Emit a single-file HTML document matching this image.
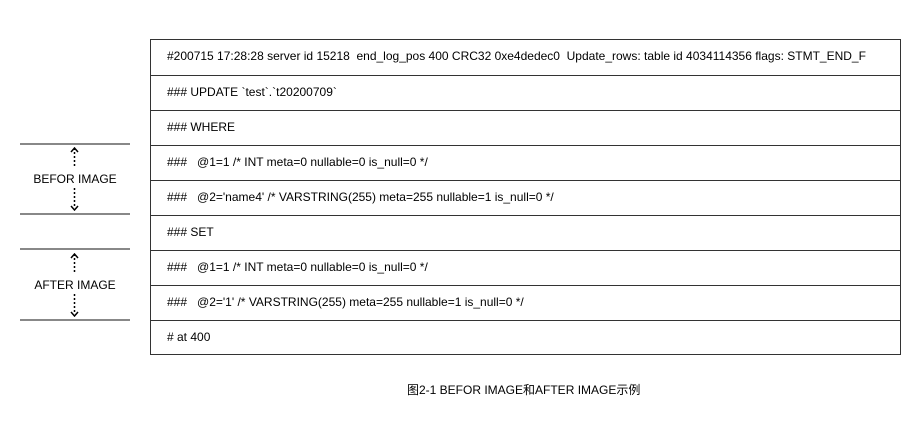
<!DOCTYPE html>
<html><head><meta charset="utf-8"><style>
body{margin:0;width:920px;height:430px;background:#fff;position:relative;font-family:"Liberation Sans","Noto Sans CJK SC",sans-serif;color:#000;overflow:hidden}
.t{position:absolute;left:150px;top:39px;width:749px;height:314px;border:1.5px solid #333}
.r{position:absolute;left:0;width:749px;height:35px;border-top:1.5px solid #333;box-sizing:border-box;font-size:12px;line-height:33px;padding-left:16px;white-space:pre}
.r:first-child{border-top:none}
.l{position:absolute;left:20px;width:110px;height:0;border-top:2px solid #888}
.lab{position:absolute;left:20px;width:110px;text-align:center;font-size:12px}
.cap{position:absolute;left:407px;top:381px;font-size:12px}
</style></head><body>
<div class="t">
<div class="r" style="top:0">#200715 17:28:28 server id 15218  end_log_pos 400 CRC32 0xe4dedec0  Update_rows: table id 4034114356 flags: STMT_END_F</div>
<div class="r" style="top:35px">### UPDATE `test`.`t20200709`</div>
<div class="r" style="top:70px">### WHERE</div>
<div class="r" style="top:105px">###   @1=1 /* INT meta=0 nullable=0 is_null=0 */</div>
<div class="r" style="top:140px">###   @2='name4' /* VARSTRING(255) meta=255 nullable=1 is_null=0 */</div>
<div class="r" style="top:175px">### SET</div>
<div class="r" style="top:210px">###   @1=1 /* INT meta=0 nullable=0 is_null=0 */</div>
<div class="r" style="top:245px">###   @2='1' /* VARSTRING(255) meta=255 nullable=1 is_null=0 */</div>
<div class="r" style="top:280px"># at 400</div>
</div>
<div class="l" style="top:143px"></div>
<div class="l" style="top:213px"></div>
<div class="l" style="top:248px"></div>
<div class="l" style="top:319px"></div>
<svg width="920" height="430" style="position:absolute;left:0;top:0" fill="none" stroke="#000" stroke-width="1.5">
<path d="M74.5 148v20M74.5 188v20" stroke-dasharray="2 2"/>
<path d="M71 152l3.5-4 3.5 4M71 206l3.5 4 3.5-4"/>
<path d="M74.5 254v20M74.5 294v20" stroke-dasharray="2 2"/>
<path d="M71 258l3.5-4 3.5 4M71 312l3.5 4 3.5-4"/>
</svg>
<div class="lab" style="top:172px">BEFOR IMAGE</div>
<div class="lab" style="top:278px">AFTER IMAGE</div>
<div class="cap">图2-1 BEFOR IMAGE和AFTER IMAGE示例</div>
</body></html>
